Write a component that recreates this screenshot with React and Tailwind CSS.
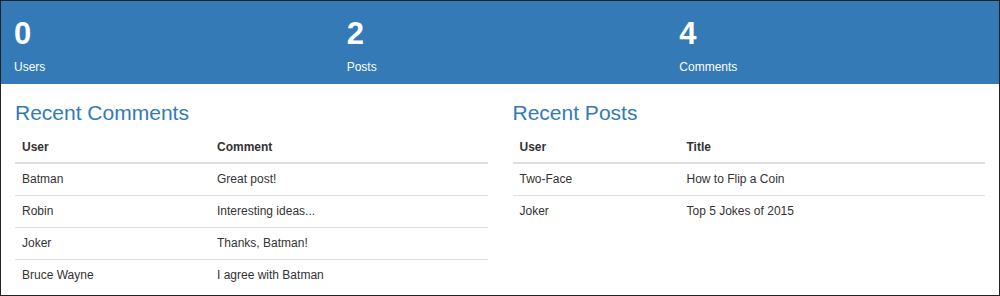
import React from "react";

const stats = [
  { value: 0, label: "Users" },
  { value: 2, label: "Posts" },
  { value: 4, label: "Comments" },
];

const comments = [
  ["Batman", "Great post!"],
  ["Robin", "Interesting ideas..."],
  ["Joker", "Thanks, Batman!"],
  ["Bruce Wayne", "I agree with Batman"],
];

const posts = [
  ["Two-Face", "How to Flip a Coin"],
  ["Joker", "Top 5 Jokes of 2015"],
];

function DataTable({ title, headers, rows, firstCol }) {
  return (
    <div>
      <h3 className="text-[21px] leading-[23px] text-[#337ab7] mt-[17px] mb-[8px]">{title}</h3>
      <table className="w-full text-[12px] leading-[17px] text-[#333] border-collapse">
        <colgroup>
          <col style={{ width: firstCol }} />
          <col />
        </colgroup>
        <thead>
          <tr className="border-b-2 border-[#ddd]">
            {headers.map((h) => (
              <th key={h} className="text-left font-bold px-[7px] pt-[7px] pb-[6px]">
                {h}
              </th>
            ))}
          </tr>
        </thead>
        <tbody>
          {rows.map((r, i) => (
            <tr key={i} className={i < rows.length - 1 ? "border-b border-[#ddd]" : ""}>
              {r.map((c, j) => (
                <td key={j} className="px-[7px] py-[7px]">
                  {c}
                </td>
              ))}
            </tr>
          ))}
        </tbody>
      </table>
    </div>
  );
}

function App() {
  return (
    <div className="w-[1000px] h-[296px] border border-[#222] bg-white overflow-hidden font-['Liberation_Sans',Arial,sans-serif]">
      <div className="bg-[#337ab7] text-white grid grid-cols-3 h-[83px]">
        {stats.map((s) => (
          <div key={s.label} className="pl-[13px] pt-4">
            <div className="text-[31px] leading-[34px] font-bold">{s.value}</div>
            <div className="text-[12px] leading-[17px] mt-2">{s.label}</div>
          </div>
        ))}
      </div>
      <div className="grid grid-cols-2 gap-[25px] px-[14px]">
        <DataTable
          title="Recent Comments"
          headers={["User", "Comment"]}
          rows={comments}
          firstCol="195px"
        />
        <DataTable
          title="Recent Posts"
          headers={["User", "Title"]}
          rows={posts}
          firstCol="167px"
        />
      </div>
    </div>
  );
}

export default App;
